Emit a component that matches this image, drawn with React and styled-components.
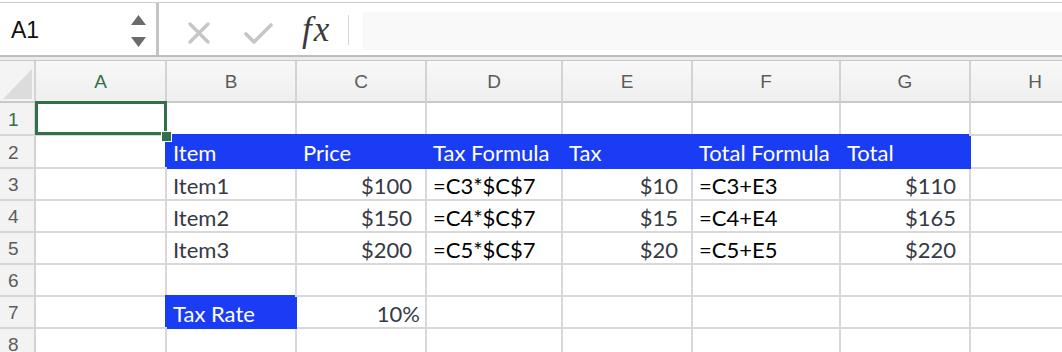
import styled, { createGlobalStyle, css } from "styled-components"

const GlobalStyle = createGlobalStyle`
    html, body {
        margin: 0;
        padding: 0;
        background: #ffffff;
        overflow: hidden;
    }
    body {
        font-family: "Liberation Sans", Arial, sans-serif;
    }
`

const BLUE = "#1a3cf5"
const GREEN = "#32704a"
const GRID = "#d8d8d8"

const columns = [
    { key: "A", width: 131 },
    { key: "B", width: 130 },
    { key: "C", width: 130 },
    { key: "D", width: 136 },
    { key: "E", width: 130 },
    { key: "F", width: 148 },
    { key: "G", width: 130 },
    { key: "H", width: 130 },
]

const rowHeights = [33, 33, 32, 32, 32, 32, 32, 32]

// cell contents keyed by address; kind: head | text | money | formula | pct
const cells = {
    B2: { v: "Item", kind: "head" },
    C2: { v: "Price", kind: "head" },
    D2: { v: "Tax Formula", kind: "head" },
    E2: { v: "Tax", kind: "head" },
    F2: { v: "Total Formula", kind: "head" },
    G2: { v: "Total", kind: "head" },
    B3: { v: "Item1", kind: "text" },
    C3: { v: "$100", kind: "money" },
    D3: { v: "=C3*$C$7", kind: "formula" },
    E3: { v: "$10", kind: "money" },
    F3: { v: "=C3+E3", kind: "formula" },
    G3: { v: "$110", kind: "money" },
    B4: { v: "Item2", kind: "text" },
    C4: { v: "$150", kind: "money" },
    D4: { v: "=C4*$C$7", kind: "formula" },
    E4: { v: "$15", kind: "money" },
    F4: { v: "=C4+E4", kind: "formula" },
    G4: { v: "$165", kind: "money" },
    B5: { v: "Item3", kind: "text" },
    C5: { v: "$200", kind: "money" },
    D5: { v: "=C5*$C$7", kind: "formula" },
    E5: { v: "$20", kind: "money" },
    F5: { v: "=C5+E5", kind: "formula" },
    G5: { v: "$220", kind: "money" },
    B7: { v: "Tax Rate", kind: "head" },
    C7: { v: "10%", kind: "pct" },
}

export default function App(){
    return(
        <Page>
            <GlobalStyle />
            <Toolbar>
                <NameBox>
                    <NameText>A1</NameText>
                    <Spinner>
                        <svg width="15" height="10" viewBox="0 0 15 10">
                            <polygon points="7.5,0 15,10 0,10" fill="#6b6b6b" />
                        </svg>
                        <svg width="15" height="10" viewBox="0 0 15 10">
                            <polygon points="0,0 15,0 7.5,10" fill="#6b6b6b" />
                        </svg>
                    </Spinner>
                </NameBox>
                <FormulaTools>
                    <ToolIcon $w={22}>
                        <svg width="22" height="22" viewBox="0 0 22 22">
                            <path d="M2 2 L20 20 M20 2 L2 20" stroke="#c6c6c6" strokeWidth="3.4" strokeLinecap="round" />
                        </svg>
                    </ToolIcon>
                    <ToolIcon $w={29}>
                        <svg width="29" height="22" viewBox="0 0 29 22">
                            <path d="M2 12 L10 20 L27 3" stroke="#c6c6c6" strokeWidth="3.6" strokeLinecap="round" strokeLinejoin="round" fill="none" />
                        </svg>
                    </ToolIcon>
                    <Fx>fx</Fx>
                    <Divider />
                    <FormulaInput />
                </FormulaTools>
            </Toolbar>
            <Strip />
            <Sheet $cols={columns.map(c => c.width + "px").join(" ")} $rows={[42, ...rowHeights].map(h => h + "px").join(" ")}>
                <Corner><CornerMark /></Corner>
                {columns.map(col =>
                    <ColHead key={col.key} $active={col.key === "A"}>{col.key}</ColHead>
                )}
                {rowHeights.map((h, r) => {
                    const row = r + 1
                    return [
                        <RowHead key={"h" + row} $active={row === 1}>{row}</RowHead>,
                        ...columns.map(col => {
                            const addr = col.key + row
                            const cell = cells[addr]
                            if (addr === "A1") return <Cell key={addr} $selected />
                            return(
                                <Cell key={addr} $kind={cell ? cell.kind : null}>
                                    {cell ? cell.v : null}
                                </Cell>
                            )
                        })
                    ]
                })}
            </Sheet>
        </Page>
    )
}

const Page = styled.div`
    width: 1062px;
    height: 352px;
    padding-top: 2px;
    box-sizing: border-box;
    overflow: hidden;
    background: #ffffff;
`

const Toolbar = styled.div`
    display: flex;
    height: 52px;
    border-top: 1px solid #cdcdcd;
    border-bottom: 2px solid #bdbdbd;
    background: #ffffff;
`

const NameBox = styled.div`
    width: 159px;
    box-sizing: border-box;
    display: flex;
    align-items: center;
    justify-content: space-between;
    padding: 0 10px 0 11px;
    border-right: 3px solid #c4c4c4;
`

const NameText = styled.span`
    font-family: "Liberation Sans", Arial, sans-serif;
    font-size: 23px;
    color: #111111;
    padding-top: 3px;
`

const Spinner = styled.div`
    display: flex;
    flex-direction: column;
    gap: 12px;
    margin-top: 3px;
    svg { display: block; }
`

const FormulaTools = styled.div`
    flex: 1;
    display: flex;
    align-items: center;
    padding-left: 29px;
`

const ToolIcon = styled.div`
    width: ${p => p.$w}px;
    height: 22px;
    margin-right: ${p => p.$w === 22 ? 34 : 29}px;
    margin-top: 8px;
    svg { display: block; }
`

const Fx = styled.span`
    font-family: "Liberation Serif", "Times New Roman", serif;
    font-style: italic;
    font-size: 35px;
    letter-spacing: 2px;
    color: #3a3a3a;
    width: 31px;
    margin-top: 1px;
`

const Divider = styled.div`
    width: 1px;
    height: 30px;
    background: #d6d6d6;
    margin: 2px 14px 0 15px;
`

const FormulaInput = styled.div`
    flex: 1;
    align-self: stretch;
    margin: 9px 0 5px;
    background: #f9f9f9;
`

const Strip = styled.div`
    height: 3px;
    background: #ececec;
    border-bottom: 1px solid #c8c8c8;
`

const Sheet = styled.div`
    display: grid;
    grid-template-columns: 36px ${p => p.$cols};
    grid-template-rows: ${p => p.$rows};
    width: max-content;
`

const headBase = css`
    box-sizing: border-box;
    background: linear-gradient(#f8f8f8, #efefef);
    border-right: 2px solid #d3d3d3;
    border-bottom: 2px solid #c9c9c9;
    font-family: "Liberation Sans", Arial, sans-serif;
    font-size: 19px;
    color: ${p => p.$active ? GREEN : "#5c5c5c"};
    display: flex;
    align-items: center;
`

const Corner = styled.div`
    ${headBase}
    position: relative;
    background: #f4f4f4;
`

const CornerMark = styled.span`
    position: absolute;
    left: 3px;
    top: 8px;
    width: 29px;
    height: 30px;
    background: #dcdcdc;
    clip-path: polygon(100% 0, 100% 100%, 0 100%);
`

const ColHead = styled.div`
    ${headBase}
    justify-content: center;
    padding-top: 2px;
`

const RowHead = styled.div`
    ${headBase}
    background: #f3f3f3;
    border-bottom: 2px solid #d6d6d6;
    padding-left: 8px;
    padding-top: 2px;
`

const Cell = styled.div`
    box-sizing: border-box;
    border-right: 2px solid ${GRID};
    border-bottom: 2px solid ${GRID};
    display: flex;
    align-items: center;
    padding: 2px 6px 0 6px;
    white-space: nowrap;
    font-family: Lato, "Open Sans", sans-serif;
    font-size: 22px;
    color: #353a45;
    position: ${p => p.$selected ? "relative" : "static"};

    ${p => p.$kind === "head" && css`
        background: ${BLUE};
        border-color: ${BLUE};
        box-shadow: -2px -2px 0 0 ${BLUE};
        color: #ffffff;
    `}
    ${p => p.$kind === "money" && css`
        justify-content: flex-end;
        padding-right: 13px;
    `}
    ${p => p.$kind === "pct" && css`
        justify-content: flex-end;
        padding-right: 5px;
    `}
    ${p => p.$kind === "formula" && css`
        color: #000000;
    `}
    ${p => p.$selected && css`
        &::before {
            content: "";
            position: absolute;
            top: -2px;
            left: -1px;
            right: -2px;
            bottom: -1px;
            border: 3px solid ${GREEN};
            z-index: 2;
        }
        &::after {
            content: "";
            position: absolute;
            left: 125px;
            top: 28px;
            width: 9px;
            height: 9px;
            background: ${GREEN};
            border: 1px solid #ffffff;
            z-index: 3;
        }
    `}
`
